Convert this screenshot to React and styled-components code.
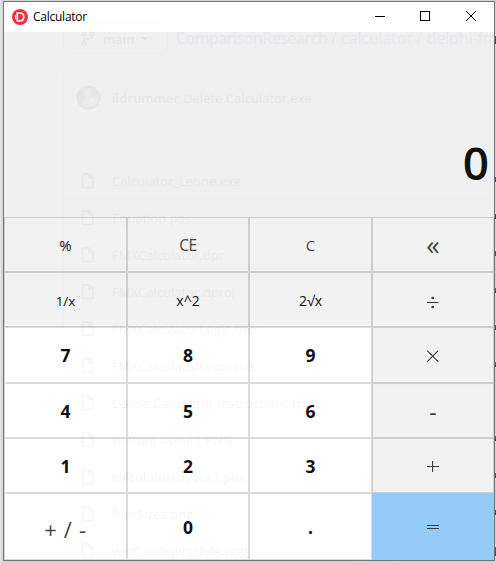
import React from "react";
import styled, { createGlobalStyle } from "styled-components";

const Global = createGlobalStyle`
  * { box-sizing: border-box; }
  html, body { margin: 0; padding: 0; overflow: hidden; }
  body { font-family: "Open Sans", "Noto Sans", sans-serif; color: #111; }
`;

const Desktop = styled.main`
  position: relative;
  width: 496px;
  height: 564px;
  padding: 1px 1px 3px 3px;
  background: linear-gradient(90deg, #e6e6e4, #d4d4d2 3px, #d2d2d2);
  overflow: hidden;
`;

const Window = styled.section`
  position: relative;
  width: 492px;
  height: 560px;
  display: flex;
  flex-direction: column;
  border: 1px solid #737373;
  background: #f0f0f0;
  overflow: hidden;
`;

const TitleBar = styled.header`
  height: 30px;
  flex: none;
  display: flex;
  align-items: center;
  justify-content: space-between;
  background: #fff;
`;

const Title = styled.div`
  display: flex;
  align-items: center;
  gap: 5px;
  padding-left: 8px;
  font-size: 12px;
  line-height: 16px;
  letter-spacing: -0.25px;
  color: #000;
  svg { display: block; }
`;

const WindowControls = styled.nav`
  display: flex;
  height: 30px;
`;

const ControlButton = styled.button`
  width: 46px;
  height: 28px;
  padding: 0;
  display: grid;
  place-items: center;
  border: 0;
  background: none;
  svg { display: block; }
  &:first-child svg { margin-left: 1px; }
`;

const Display = styled.output`
  height: 185px;
  flex: none;
  display: flex;
  align-items: flex-start;
  justify-content: flex-end;
  padding: 100px 5px 0 0;
  font-size: 46px;
  font-weight: 600;
  line-height: 60px;
`;

const Keypad = styled.div`
  display: grid;
  grid-template-columns: 123px 122px 123px 122px;
  grid-template-rows: 55px 55px 56px 55px 55px 67px;
`;

const toneStyles = {
  digit: { background: "#fff", border: "#dadada" },
  func: { background: "#f2f2f2", border: "#cecece" },
  equals: { background: "#96caf7", border: "#96caf7" },
};

const Key = styled.button`
  display: grid;
  place-items: center;
  margin: 0;
  padding: ${(p) => p.$drop || 0}px 0 0;
  border: 1px solid ${(p) => toneStyles[p.$tone].border};
  background: ${(p) => toneStyles[p.$tone].background};
  color: ${(p) => p.$color || "#111"};
  font-family: inherit;
  font-size: ${(p) => p.$size}px;
  font-weight: ${(p) => (p.$tone === "digit" && !p.$light ? 700 : 400)};
  letter-spacing: ${(p) => p.$tracking || 0}px;
  line-height: 24px;
  svg { display: block; }
`;

const Ghost = styled.div`
  position: absolute;
  inset: 0;
  opacity: 0.045;
  pointer-events: none;
  color: #24292e;
`;

const BranchPill = styled.div`
  position: absolute;
  left: 59px;
  top: 21px;
  width: 105px;
  height: 31px;
  padding-left: 17px;
  display: flex;
  align-items: center;
  border: 1px solid rgba(80, 100, 120, 0.35);
  border-radius: 6px;
  font-size: 13px;
  font-weight: 600;
  svg { display: block; }
  span { margin: 0 7px 0 8px; letter-spacing: -0.1px; }
`;

const Breadcrumb = styled.div`
  position: absolute;
  left: 172px;
  top: 24px;
  font-size: 16px;
  line-height: 24px;
  letter-spacing: -0.12px;
  white-space: nowrap;
  color: #5860d8;
  b { font-weight: 600; letter-spacing: -0.72px; }
  i { font-style: normal; color: #555; }
`;

const Panel = styled.div`
  position: absolute;
  left: 59px;
  top: 68px;
  width: 440px;
  height: 500px;
  border: 1px solid rgba(80, 100, 120, 0.25);
  border-radius: 6px 0 0 0;
`;

const CommitRow = styled.div`
  height: 55px;
  margin-bottom: 36px;
  display: flex;
  align-items: flex-start;
  padding: 14px 0 0 12px;
  background: rgba(190, 240, 230, 0.35);
  font-size: 13px;
  line-height: 27px;
  white-space: nowrap;
  svg { display: block; margin-right: 11px; }
  b { font-weight: 600; margin-right: 4px; }
`;

const FileRow = styled.div`
  height: 37px;
  display: flex;
  align-items: center;
  padding-left: 17px;
  border-top: 1px solid rgba(80, 100, 120, 0.16);
  font-size: 13.2px;
  letter-spacing: -0.08px;
  white-space: nowrap;
  color: #444;
  svg { display: block; margin-right: 17px; }
`;

const EdgeText = styled.div`
  position: absolute;
  left: 495px;
  top: ${(p) => p.$top}px;
  width: 1px;
  height: ${(p) => p.$height || 5}px;
  background: linear-gradient(#4b6288, #483b3b);
`;

const Logo = () => (
  <svg width="16" height="16" viewBox="0 0 16 16">
    <circle cx="8" cy="8" r="8" fill="#f22f40" />
    <path d="M5.3 4h2.6c2.4 0 3.8 1.5 3.8 4s-1.4 4-3.8 4H5.3z" fill="none" stroke="#fff" strokeWidth="1.7" />
    <path d="M3.6 6v4" stroke="#fff" strokeWidth="1" />
  </svg>
);

const FileIcon = () => (
  <svg width="14" height="16" viewBox="0 0 14 16" fill="none" stroke="currentColor" strokeWidth="1.5">
    <path d="M2.8 1h5.7L12 4.5v8.7c0 .8-.5 1.3-1.3 1.3H2.8c-.8 0-1.3-.5-1.3-1.3V2.3C1.5 1.5 2 1 2.8 1z" />
    <path d="M8 1v4h4" />
  </svg>
);

const BranchIcon = () => (
  <svg width="14" height="16" viewBox="0 0 14 16" fill="none" stroke="currentColor" strokeWidth="1.5">
    <circle cx="3" cy="3" r="1.7" />
    <circle cx="3" cy="13" r="1.7" />
    <circle cx="11" cy="3" r="1.7" />
    <path d="M3 4.7v6.6M11 4.7v1.1c0 1.2-.8 2-2 2H5c-1.2 0-2 .8-2 2" />
  </svg>
);

const Avatar = () => (
  <svg width="25" height="25" viewBox="0 0 25 25">
    <circle cx="12.5" cy="12.5" r="12" fill="#111" />
    <path d="M9 4l5-1 2 5-2 3 4 3 3 5-4 3-8 1-3-4 3-5-1-5z" fill="#fff" opacity=".45" />
    <circle cx="18" cy="15" r="4" fill="#fff" opacity=".35" />
  </svg>
);

const Symbol = ({ kind }) => (
  <svg width="14" height="14" viewBox="0 0 14 14" fill="none" stroke="#3b3b3b" strokeWidth="1.1">
    {kind === "divide" && (
      <>
        <path d="M1 7.5h11.5" />
        <circle cx="6.7" cy="3" r="1.3" fill="#333" stroke="none" />
        <circle cx="6.7" cy="12" r="1.3" fill="#333" stroke="none" />
      </>
    )}
    {kind === "times" && <path d="M1.2 1.7l11 11M12.2 1.7l-11 11" />}
    {kind === "plus" && <path d="M1 7.5h12M6.6 2v11" />}
    {kind === "equals" && <path d="M1 5.5h12M1 8.5h12" strokeWidth="1" />}
  </svg>
);

const keys = [
  { label: "%", tone: "func", size: 15, drop: 1 },
  { label: "CE", tone: "func", size: 15.5, drop: 1, color: "#444", tracking: -0.5 },
  { label: "C", tone: "func", size: 15, drop: 1, color: "#444" },
  { label: "«", tone: "func", size: 27, drop: 0, color: "#444" },
  { label: "1/x", tone: "func", size: 13.5, drop: 2 },
  { label: "x^2", tone: "func", size: 14, drop: 2 },
  { label: "2√x", tone: "func", size: 14, drop: 2 },
  { label: "÷", symbol: "divide", tone: "func", size: 16, drop: 5 },
  { label: "7", tone: "digit", size: 17.5 },
  { label: "8", tone: "digit", size: 17.5 },
  { label: "9", tone: "digit", size: 17.5 },
  { label: "×", symbol: "times", tone: "func", size: 16, drop: 2 },
  { label: "4", tone: "digit", size: 17.5, drop: 1 },
  { label: "5", tone: "digit", size: 17.5, drop: 1 },
  { label: "6", tone: "digit", size: 17.5, drop: 1 },
  { label: "-", tone: "func", size: 23, drop: 2, color: "#444" },
  { label: "1", tone: "digit", size: 17.5 },
  { label: "2", tone: "digit", size: 17.5 },
  { label: "3", tone: "digit", size: 17.5 },
  { label: "+", symbol: "plus", tone: "func", size: 16, drop: 0 },
  { label: "+ / -", tone: "digit", size: 22, light: true, drop: 4, color: "#444", tracking: 0.7 },
  { label: "0", tone: "digit", size: 17.5, drop: 1 },
  { label: ".", tone: "digit", size: 17.5, drop: 1 },
  { label: "=", symbol: "equals", tone: "equals", size: 16, drop: 1 },
];

const files = [
  "Calculator_Leone.exe",
  "Equation.pas",
  "FMXCalculator.dpr",
  "FMXCalculator.dproj",
  "FMXCalculatorLogic.fmx",
  "FMXCalculatorLogic.pas",
  "Leone Calculator Instructions.md",
  "buttonLayout1.PNG",
  "calculatorLayout1.png",
  "fontSizes.png",
  "winCalcDigitsStyle.png",
];

export default function App() {
  return (
    <Desktop>
      <Global />
      <Window>
        <TitleBar>
          <Title><Logo />Calculator</Title>
          <WindowControls>
            <ControlButton aria-label="Minimize">
              <svg width="10" height="10"><path d="M0 5.5h10" stroke="#000" /></svg>
            </ControlButton>
            <ControlButton aria-label="Maximize">
              <svg width="10" height="10"><rect x=".5" y=".5" width="9" height="9" fill="none" stroke="#000" /></svg>
            </ControlButton>
            <ControlButton aria-label="Close">
              <svg width="10" height="10"><path d="M0 0l10 10M10 0L0 10" stroke="#000" /></svg>
            </ControlButton>
          </WindowControls>
        </TitleBar>
        <Display>0</Display>
        <Keypad>
          {keys.map((k) => (
            <Key key={k.label} aria-label={k.label} $tone={k.tone} $size={k.size} $drop={k.drop}
              $color={k.color} $light={k.light} $tracking={k.tracking}>
              {k.symbol ? <Symbol kind={k.symbol} /> : k.label}
            </Key>
          ))}
        </Keypad>
        <Ghost>
          <BranchPill>
            <BranchIcon /><span>main</span>
            <svg width="8" height="4"><path d="M0 0h8L4 4z" fill="currentColor" /></svg>
          </BranchPill>
          <Breadcrumb><b>ComparisonResearch</b> <i>/</i> calculator <i>/</i> delphi-fmx</Breadcrumb>
          <Panel>
            <CommitRow><Avatar /><b>ildrummer</b>Delete Calculator.exe</CommitRow>
            <div>
              {files.map((f) => <FileRow key={f}><FileIcon /><span>{f}</span></FileRow>)}
            </div>
          </Panel>
        </Ghost>
      </Window>
      <EdgeText $top={36} $height={8} />
      {[177, 214, 251, 288, 325, 362, 436, 473, 510].map((top) => <EdgeText key={top} $top={top} />)}
      <EdgeText $top={547} $height={9} />
    </Desktop>
  );
}
